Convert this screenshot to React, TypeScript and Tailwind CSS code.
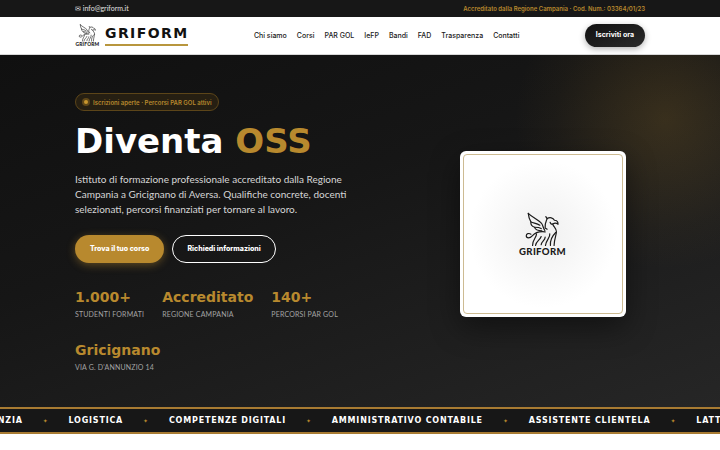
import React from 'react';

const navItems = ['Chi siamo', 'Corsi', 'PAR GOL', 'IeFP', 'Bandi', 'FAD', 'Trasparenza', 'Contatti'];

const stats = [
  { value: '1.000+', label: 'Studenti formati' },
  { value: 'Accreditato', label: 'Regione Campania' },
  { value: '140+', label: 'Percorsi PAR GOL' },
  { value: 'Gricignano', label: "Via G. D'Annunzio 14" },
];

const courses = [
  'Infanzia',
  'Logistica',
  'Competenze digitali',
  'Amministrativo contabile',
  'Assistente clientela',
  'Lattiero',
];

const GriffinLogo: React.FC<{ className?: string }> = ({ className }) => (
  <svg viewBox="0 0 148 134" className={className} role="img" aria-label="Griform">
    <g fill="none" stroke="#1a1a1a" strokeWidth="3.6" strokeLinecap="round" strokeLinejoin="round">
      <path d="M31 4 C32 14 34 22 39 30 C38 38 43 44 50 46 C52 54 60 57 72 57" />
      <path d="M31 4 C44 17 62 23 71 34 C76 41 75 47 81 56" />
      <path d="M39 30 C48 34 57 34 66 40" />
      <path d="M50 46 C58 46 64 46 70 50" />
      <path d="M84 14 L88 20 C84 30 80 36 82 48 L88 52" />
      <path d="M88 20 C96 15 106 17 110 25 C116 25 121 29 121 37 C116 33 110 33 105 36 C100 38 98 34 97 31" />
      <path d="M105 37 C108 46 116 49 116 60 C116 70 110 78 109 101" />
      <path d="M82 60 C66 58 52 62 43 72 C36 80 25 80 25 72 C25 65 33 63 39 67" />
      <path d="M56 66 C56 78 44 82 44 101" />
      <path d="M70 74 C66 86 55 87 53 101" />
      <path d="M82 76 C82 86 71 88 70 99" />
      <path d="M96 66 C98 78 84 86 83 101" />
      <path d="M114 62 C104 72 96 82 98 101" />
    </g>
    <text x="74" y="130" textAnchor="middle" fontSize="29" fontWeight="900" fill="#1a1a1a" fontFamily="Lato, sans-serif" letterSpacing="1">
      GRIFORM
    </text>
  </svg>
);

const TopBar: React.FC = () => (
  <div className="bg-[#171717]">
    <div className="mx-auto flex h-[17px] max-w-[602px] items-center justify-between px-4 text-[7px]">
      <a href="mailto:info@griform.it" className="text-[#e0e0e0]">✉ info@griform.it</a>
      <span className="font-['Inter'] text-[6px] font-semibold text-[#b8892e]">Accreditato dalla Regione Campania · Cod. Num.: 03364/01/23</span>
    </div>
  </div>
);

const Header: React.FC = () => (
  <header className="border-b border-[#d8d8d8] bg-white">
    <div className="mx-auto flex h-[37px] max-w-[602px] items-center justify-between px-4">
      <a href="#home" className="flex items-center gap-[5px]">
        <GriffinLogo className="w-[25px]" />
        <span className="border-b-2 border-[#b8963e] pb-[3px] font-['DejaVu_Sans'] text-[14px] leading-[16px] font-bold tracking-widest text-[#111]">
          GRIFORM
        </span>
      </a>
      <nav className="flex items-center gap-[10px] font-['Inter'] text-[7px] leading-[12px] font-medium text-[#1a1a1a]">
        {navItems.map((item) => (
          <a key={item} href="#sezione" className="whitespace-nowrap">{item}</a>
        ))}
      </nav>
      <button className="h-[23px] rounded-full bg-linear-to-br from-[#111] to-[#2b2b2b] px-[11px] font-['Inter'] text-[7px] font-bold text-white shadow-[0_2px_6px_rgba(0,0,0,0.3)]">
        Iscriviti ora
      </button>
    </div>
  </header>
);

const Hero: React.FC = () => (
  <section className="bg-[radial-gradient(circle_at_665px_64px,rgba(184,137,46,0.2),rgba(184,137,46,0.12)_55px,rgba(184,137,46,0.04)_110px,transparent_150px),linear-gradient(160deg,#101010,#161616_40%,#262626)] text-white">
    <div className="mx-auto grid max-w-[602px] grid-cols-[1.64fr_1fr] items-center gap-[30px] px-4 pt-[38px] pb-[36px]">
      <div>
        <span className="flex h-[18px] w-fit items-center gap-[3px] rounded-full border border-[#5c4519] bg-[#261f12] px-[6px] font-['Inter'] text-[6px] font-semibold text-[#b8892e]">
          <span className="flex size-2 items-center justify-center rounded-full bg-[#5f4718]">
            <span className="size-1 rounded-full bg-[#c9972f]" />
          </span>
          Iscrizioni aperte · Percorsi PAR GOL attivi
        </span>

        <h1 className="mt-3 font-['DejaVu_Sans'] text-[34px] leading-[36px] font-bold whitespace-nowrap">
          Diventa <span className="text-[#b8892e]">OSS</span>
        </h1>

        <p className="mt-[13px] max-w-[280px] text-[10px] leading-[15px] text-[#d6d6d6]">
          Istituto di formazione professionale accreditato dalla Regione Campania a Gricignano di Aversa. Qualifiche concrete, docenti selezionati, percorsi finanziati per tornare al lavoro.
        </p>

        <div className="mt-[18px] flex gap-2 font-['Inter'] text-[7px] font-extrabold">
          <button className="h-[28px] rounded-full bg-[#b8892e] px-[15px] shadow-[0_2px_8px_rgba(184,137,46,0.45)]">
            Trova il tuo corso
          </button>
          <button className="h-[28px] rounded-full border border-white px-[14px]">Richiedi informazioni</button>
        </div>

        <dl className="mt-[26px] flex flex-wrap gap-x-[18px] gap-y-[24px]">
          {stats.map((stat) => (
            <div key={stat.label} className="flex flex-col-reverse gap-[5px]">
              <dt className="text-[7px] leading-[8px] tracking-wide text-[#a3a3a3] uppercase">{stat.label}</dt>
              <dd className="font-['DejaVu_Sans'] text-[14px] leading-[16px] font-bold text-[#b8892e]">{stat.value}</dd>
            </div>
          ))}
        </dl>
      </div>

      <div className="mx-auto mt-1 w-[166px] rounded-md bg-white p-[3px] shadow-[0_10px_30px_rgba(0,0,0,0.45)]">
        <div className="flex aspect-square items-center justify-center rounded-sm border border-[#cdbb92] bg-[radial-gradient(circle,#f0f0f0,#fff_66%)]">
          <GriffinLogo className="w-[49px]" />
        </div>
      </div>
    </div>
  </section>
);

const Ticker: React.FC = () => (
  <div className="overflow-hidden border-y-2 border-[#a87b32] bg-[#171717]">
    <ul className="flex h-[23px] w-full items-center justify-center gap-[20px] font-['DejaVu_Sans'] text-[8px] leading-[12px] font-bold tracking-widest whitespace-nowrap text-white uppercase">
      {courses.map((course, i) => (
        <React.Fragment key={course}>
          {i > 0 && <li className="text-[6px] text-[#b8892e]" aria-hidden="true">✦</li>}
          <li>{course}</li>
        </React.Fragment>
      ))}
    </ul>
  </div>
);

const App: React.FC = () => (
  <div className="min-h-screen bg-white font-['Lato',sans-serif]">
    <TopBar />
    <Header />
    <main>
      <Hero />
      <Ticker />
    </main>
  </div>
);

export default App;
